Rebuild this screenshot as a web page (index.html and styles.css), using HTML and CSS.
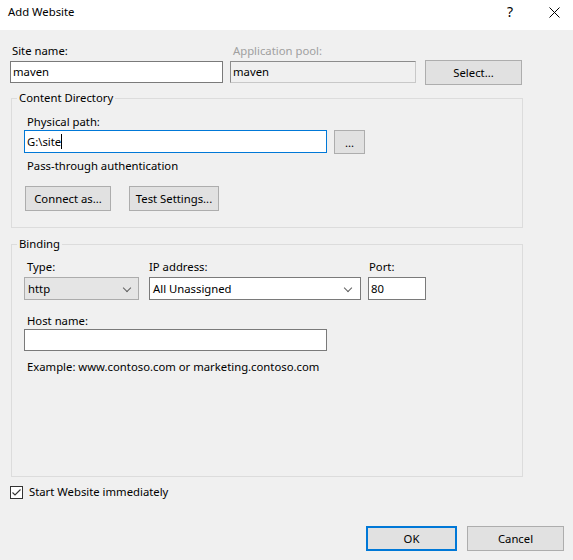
FILE: index.html
```html
<!DOCTYPE html>
<html lang="en">
<head>
<meta charset="utf-8">
<title>Add Website</title>
<link rel="stylesheet" href="styles.css">
</head>
<body>
<div class="dialog">
  <div class="titlebar">
    <span class="title">Add Website</span>
    <span class="tb-help">?</span>
    <span class="tb-close">
      <svg width="11" height="11" viewBox="0 0 11 11"><path d="M0.5 0.5 L10.5 10.5 M10.5 0.5 L0.5 10.5" stroke="#000" stroke-width="1" fill="none"/></svg>
    </span>
  </div>

  <div class="body">
    <div class="site-row">
      <div class="col col-site">
        <div class="lbl">Site name:</div>
        <div class="textbox">maven</div>
      </div>
      <div class="col col-pool">
        <div class="lbl lbl-disabled">Application pool:</div>
        <div class="textbox textbox-disabled">maven</div>
      </div>
      <div class="col col-select">
        <button class="btn btn-select">Select...</button>
      </div>
    </div>

    <fieldset class="group group-content">
      <legend>Content Directory</legend>
      <div class="group-body content-body">
        <div class="lbl lbl-path">Physical path:</div>
        <div class="path-row">
          <div class="textbox textbox-focus path-box">G:\site<span class="caret"></span></div>
          <button class="btn btn-browse">...</button>
        </div>
        <div class="lbl note">Pass-through authentication</div>
        <div class="btn-row">
          <button class="btn btn-connect">Connect as...</button>
          <button class="btn btn-test">Test Settings...</button>
        </div>
      </div>
    </fieldset>

    <fieldset class="group group-binding">
      <legend>Binding</legend>
      <div class="group-body binding-body">
        <div class="bind-row">
          <div class="col col-type">
            <div class="lbl">Type:</div>
            <div class="combo combo-type"><span>http</span><span class="chev"></span></div>
          </div>
          <div class="col col-ip">
            <div class="lbl lbl-ip">IP address:</div>
            <div class="combo combo-ip"><span>All Unassigned</span><span class="chev"></span></div>
          </div>
          <div class="col col-port">
            <div class="lbl lbl-port">Port:</div>
            <div class="textbox port-box">80</div>
          </div>
        </div>
        <div class="lbl lbl-host">Host name:</div>
        <div class="textbox host-box"></div>
        <div class="lbl example">Example: www.contoso.com or marketing.contoso.com</div>
      </div>
    </fieldset>

    <div class="check-row">
      <span class="checkbox">
        <svg width="13" height="13" viewBox="0 0 13 13"><rect x="0.5" y="0.5" width="12" height="12" fill="#fff" stroke="#333" stroke-width="1"/><path d="M2.5 6.5 L5 9 L10.5 3.5" stroke="#333" stroke-width="1.1" fill="none"/></svg>
      </span>
      <span class="check-label">Start Website immediately</span>
    </div>

    <div class="footer">
      <button class="btn btn-ok">OK</button>
      <button class="btn btn-cancel">Cancel</button>
    </div>
  </div>
</div>
</body>
</html>
```

FILE: styles.css
```css
* { box-sizing: border-box; }

html, body {
  margin: 0;
  padding: 0;
  background: #f0f0f0;
}

body {
  font-family: "Noto Sans", "Open Sans", "DejaVu Sans", sans-serif;
  font-size: 11.3px;
  line-height: 16px;
  color: #000;
  width: 573px;
  height: 560px;
  overflow: hidden;
}

.titlebar {
  height: 30px;
  background: #fff;
  display: flex;
  align-items: flex-start;
  padding-left: 8px;
}

.title {
  padding-top: 4px;
  flex: 1;
}

.tb-help {
  padding-top: 4px;
  width: 12px;
  margin-right: 30px;
  font-size: 14px;
  font-weight: 400;
  color: #000;
}

.tb-close {
  padding-top: 7px;
  margin-right: 13px;
  display: flex;
}

.body {
  padding: 12px 9px 0 10px;
}

.lbl {
  height: 16px;
  line-height: 18px;
  white-space: nowrap;
}

.lbl-disabled { color: #a0a0a0; }

.site-row {
  display: flex;
  align-items: flex-start;
}

.col {
  display: flex;
  flex-direction: column;
}

.col-site { width: 213px; }
.col-pool { width: 186px; margin-left: 7px; }
.col-select { margin-left: 9px; padding-top: 18px; }

.site-row .lbl { padding-left: 2px; margin-bottom: 3px; }
.site-row .lbl-disabled { padding-left: 3px; }

.textbox {
  height: 22px;
  border: 1px solid #7a7a7a;
  background: #fff;
  padding: 2px 0 0 2px;
  white-space: nowrap;
}

.textbox-disabled {
  background: #f0f0f0;
  border: 1px solid #8c8c8c;
  border-right-color: #c8c8c8;
  border-bottom-color: #c8c8c8;
}

.textbox-focus {
  border-color: #0078d7;
}

.btn {
  font: inherit;
  color: #000;
  background: #e1e1e1;
  border: 1px solid #adadad;
  height: 25px;
  padding: 0;
  margin: 0;
  border-radius: 0;
  line-height: 16px;
}

.btn-select { width: 97px; }

.group {
  margin: 0;
  padding: 0;
  border: 1px solid #dcdcdc;
  width: 512px;
  margin-left: 1px;
  min-width: 0;
}

.group legend {
  padding: 0 2px;
  margin-left: 5px;
  line-height: 16px;
}

.group-body {
  padding-left: 12px;
}

.group-content { margin-top: 5px; }

.content-body {
  padding-top: 7px;
  padding-bottom: 16px;
}

.lbl-path { padding-left: 3px; margin-bottom: 1px; }

.path-row {
  display: flex;
  align-items: flex-start;
  height: 24px;
}

.path-box {
  width: 303px;
  height: 23px;
  padding-left: 2px;
  padding-top: 3px;
  display: flex;
  align-items: flex-start;
}

.caret {
  display: inline-block;
  width: 1px;
  height: 15px;
  background: #000;
  margin-top: 0;
}

.btn-browse {
  width: 31px;
  height: 24px;
  margin-left: 7px;
  padding-top: 2px;
}

.note {
  margin-top: 3px;
  padding-left: 3px;
}

.btn-row {
  display: flex;
  margin-top: 13px;
}

.btn-connect { width: 86px; margin-left: 1px; }
.btn-test { width: 90px; margin-left: 18px; }

.group-binding {
  margin-top: 8px;
  height: 241px;
}

.binding-body {
  padding-top: 6px;
}

.bind-row {
  display: flex;
  align-items: flex-start;
}

.bind-row .lbl { margin-bottom: 3px; }

.col-type { width: 115px; }
.col-type .lbl { padding-left: 3px; }
.col-ip { width: 212px; margin-left: 10px; }
.col-port { width: 58px; margin-left: 7px; }
.lbl-ip { padding-left: 0; }
.lbl-port { padding-left: 1px; }

.combo {
  height: 23px;
  display: flex;
  align-items: center;
  justify-content: space-between;
  padding: 1px 8px 0 3px;
  white-space: nowrap;
}

.combo-type {
  background: #e5e5e5;
  border: 1px solid #acacac;
}

.combo-ip {
  background: #fff;
  border: 1px solid #7a7a7a;
  padding-right: 9px;
}

.chev {
  width: 6px;
  height: 6px;
  border-right: 1px solid #606060;
  border-bottom: 1px solid #606060;
  transform: rotate(45deg);
  margin-top: -3px;
}

.port-box {
  height: 23px;
  padding-top: 3px;
}

.lbl-host {
  margin-top: 12px;
  padding-left: 3px;
  margin-bottom: 1px;
}

.host-box {
  width: 303px;
}

.example {
  margin-top: 7px;
  padding-left: 3px;
}

.check-row {
  display: flex;
  align-items: center;
  margin-top: 7px;
  height: 16px;
}

.checkbox {
  display: flex;
  width: 13px;
  height: 13px;
}

.check-label {
  margin-left: 6px;
}

.footer {
  display: flex;
  justify-content: flex-end;
  margin-top: 26px;
}

.btn-ok {
  width: 91px;
  border: 2px solid #0078d7;
}

.btn-cancel {
  width: 97px;
  margin-left: 10px;
}
```
